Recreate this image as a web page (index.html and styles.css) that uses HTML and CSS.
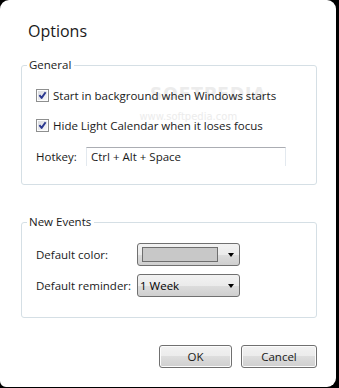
FILE: index.html
```html
<!DOCTYPE html>
<html>
<head>
<meta charset="utf-8">
<link rel="stylesheet" href="styles.css">
</head>
<body>
<div class="window">
  <div class="watermark">
    <span class="wm-big">SOFTPEDIA</span>
    <span class="wm-small">www.softpedia.com</span>
  </div>
  <h1 class="title">Options</h1>

  <fieldset class="group group-general">
    <legend class="group-label">General</legend>
    <label class="check-row">
      <svg class="checkbox" width="13" height="13" viewBox="0 0 13 13">
        <defs>
          <linearGradient id="cb" x1="0" y1="0" x2="1" y2="1">
            <stop offset="0" stop-color="#d9dbe0"/>
            <stop offset="1" stop-color="#f7f7f9"/>
          </linearGradient>
        </defs>
        <rect x="0.5" y="0.5" width="12" height="12" fill="#fdfdfd" stroke="#8e8f8f"/>
        <rect x="2" y="2" width="9" height="9" fill="url(#cb)"/>
        <path d="M3.4 6.2 L5.6 8.9 L9.6 3.2" stroke="#2a3890" stroke-width="1.9" fill="none" stroke-linejoin="round"/>
      </svg>
      <span>Start in background when Windows starts</span>
    </label>
    <label class="check-row second">
      <svg class="checkbox" width="13" height="13" viewBox="0 0 13 13">
        <rect x="0.5" y="0.5" width="12" height="12" fill="#fdfdfd" stroke="#8e8f8f"/>
        <rect x="2" y="2" width="9" height="9" fill="url(#cb)"/>
        <path d="M3.4 6.2 L5.6 8.9 L9.6 3.2" stroke="#2a3890" stroke-width="1.9" fill="none" stroke-linejoin="round"/>
      </svg>
      <span>Hide Light Calendar when it loses focus</span>
    </label>
    <div class="hotkey-row">
      <span class="hotkey-label">Hotkey:</span>
      <div class="textbox">Ctrl + Alt + Space</div>
    </div>
  </fieldset>

  <fieldset class="group group-events">
    <legend class="group-label">New Events</legend>
    <div class="field-row">
      <span class="field-label">Default color:</span>
      <div class="combo">
        <div class="swatch"></div>
        <span class="arrow"></span>
      </div>
    </div>
    <div class="field-row second-field">
      <span class="field-label">Default reminder:</span>
      <div class="combo">
        <span class="combo-text">1 Week</span>
        <span class="arrow"></span>
      </div>
    </div>
  </fieldset>

  <div class="buttons">
    <button class="btn btn-ok">OK</button>
    <button class="btn btn-cancel">Cancel</button>
  </div>
</div>
</body>
</html>
```

FILE: styles.css
```css
html, body {
  margin: 0;
  padding: 0;
  background: #000;
  overflow: hidden;
}

body {
  width: 339px;
  height: 388px;
  font-family: "Open Sans", "Noto Sans", sans-serif;
  font-size: 11.5px;
  color: #1a1a1a;
}

.window {
  position: relative;
  z-index: 0;
  box-sizing: border-box;
  width: 336px;
  height: 387px;
  background: #fff;
  border-radius: 9px 9px 9px 6px;
  padding: 20px 19px 0 21px;
}

.watermark {
  position: absolute;
  z-index: -1;
  left: 150px;
  top: 84px;
  display: flex;
  flex-direction: column;
  align-items: center;
  color: #ececec;
  font-family: "DejaVu Sans", sans-serif;
  pointer-events: none;
}

.wm-big {
  font-size: 17px;
  font-weight: bold;
  letter-spacing: 1px;
  line-height: 20px;
}

.wm-small {
  font-size: 10px;
  line-height: 14px;
  margin-top: 6px;
  margin-left: -40px;
}

.title {
  margin: 0 0 0 7px;
  font-weight: normal;
  font-size: 16px;
  line-height: 22px;
  color: #1a1a1a;
}

.group {
  margin: 15px 0 0 0;
  border: 1px solid #d5dfe5;
  border-radius: 3px;
  padding: 0 0 0 14px;
  min-inline-size: 0;
}

.group-label {
  margin-left: -9px;
  padding: 0 3px 0 2px;
  line-height: 16px;
  height: 16px;
}

.group-general {
  padding-top: 12px;
  padding-bottom: 18px;
}

.check-row {
  display: flex;
  align-items: center;
  height: 20px;
  gap: 4px;
}

.check-row.second {
  margin-top: 10px;
}

.checkbox {
  flex: none;
}

.hotkey-row {
  display: flex;
  align-items: center;
  margin-top: 12px;
  height: 19px;
}

.hotkey-label {
  width: 50px;
}

.textbox {
  box-sizing: border-box;
  width: 200px;
  height: 19px;
  border: 1px solid #e3e9ef;
  border-top-color: #abadb3;
  border-bottom: none;
  padding: 0 4px;
  line-height: 18px;
}

.group-events {
  margin-top: 29px;
  padding-top: 13px;
  padding-bottom: 20px;
}

.field-row {
  display: flex;
  align-items: center;
  height: 23px;
}

.field-row.second-field {
  margin-top: 8px;
}

.field-label {
  width: 101px;
}

.combo {
  box-sizing: border-box;
  position: relative;
  display: flex;
  align-items: center;
  width: 103px;
  height: 23px;
  border: 1px solid #707070;
  border-radius: 3px;
  background: linear-gradient(#f2f2f2 0%, #ebebeb 50%, #dddddd 50%, #cfcfcf 100%);
  padding-left: 4px;
}

.swatch {
  box-sizing: border-box;
  width: 76px;
  height: 15px;
  border: 1px solid #6e6e6e;
  background: #c8c8c8;
}

.combo-text {
  padding-left: -2px;
  margin-left: -2px;
  color: #000;
}

.arrow {
  position: absolute;
  right: 5px;
  top: 9px;
  width: 0;
  height: 0;
  border-left: 3.5px solid transparent;
  border-right: 3.5px solid transparent;
  border-top: 4px solid #000;
}

.buttons {
  display: flex;
  justify-content: flex-end;
  gap: 9px;
  margin-top: 27px;
}

.btn {
  box-sizing: border-box;
  height: 23px;
  border: 1px solid #707070;
  border-radius: 3px;
  background: linear-gradient(#f2f2f2 0%, #ebebeb 50%, #dddddd 50%, #cfcfcf 100%);
  font-family: "Open Sans", "Noto Sans", sans-serif;
  font-size: 11.5px;
  color: #1a1a1a;
  padding: 0;
  box-shadow: inset 0 0 0 1px #fcfcfc;
}

.btn-ok {
  width: 73px;
}

.btn-cancel {
  width: 76px;
}
```
